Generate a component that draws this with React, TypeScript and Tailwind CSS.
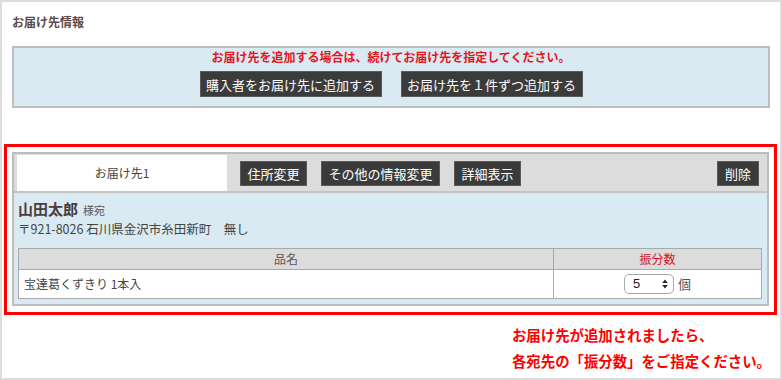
import React from "react";

function DarkButton({ children, className = "" }: { children: React.ReactNode; className?: string }) {
  return (
    <div
      className={
        "flex items-center justify-center bg-[#3b3b3b] border border-[#5a5a5a] text-white text-[13px] leading-none whitespace-nowrap " +
        className
      }
    >
      {children}
    </div>
  );
}

export default function App() {
  return (
    <div className="w-[782px] h-[380px] box-border border-2 border-[#dcdcdc] bg-white px-[10px] font-['Noto_Sans_CJK_JP',sans-serif] text-[#4a4a4a] overflow-hidden">
      {/* Title */}
      <div className="pt-[10px] h-[30px] text-[12px] leading-[20px] font-bold text-[#5b4a4a]">お届け先情報</div>

      {/* Add box */}
      <div className="mt-[14px] border-2 border-[#bdbdbd] bg-[#d9eaf3] h-[62px] box-border flex flex-col items-center">
        <div className="pt-[2px] text-[12px] leading-[14px] font-bold text-[#e8141c]">
          お届け先を追加する場合は、続けてお届け先を指定してください。
        </div>
        <div className="mt-[7px] flex gap-[19px]">
          <DarkButton className="w-[182px] h-[26px]">購入者をお届け先に追加する</DarkButton>
          <DarkButton className="w-[182px] h-[26px]">お届け先を１件ずつ追加する</DarkButton>
        </div>
      </div>

      {/* Red frame */}
      <div className="mt-[36px] ml-[-8px] mr-[-7px] border-[3px] border-[#ff0000] pt-[5px] pl-[5px] pr-[5px] pb-[6px]">
        <div className="border-2 border-[#bdbdbd] bg-[#d9eaf3]">
          {/* header */}
          <div className="bg-[#dcdcdc] border-b-2 border-[#c4c4c4] pt-[1px] pl-[3px] pr-[8px] flex items-center">
            <div className="w-[210px] h-[36px] bg-white flex items-center justify-center text-[12px] text-[#444]">
              お届け先1
            </div>
            <div className="ml-[13px] flex gap-[14px] flex-1">
              <DarkButton className="w-[67px] h-[25px]">住所変更</DarkButton>
              <DarkButton className="w-[119px] h-[25px]">その他の情報変更</DarkButton>
              <DarkButton className="w-[67px] h-[25px]">詳細表示</DarkButton>
              <div className="flex-1" />
              <DarkButton className="w-[42px] h-[25px]">削除</DarkButton>
            </div>
          </div>

          {/* body */}
          <div className="pl-[4px] pr-[5px] pt-[5px] pb-[5px]">
            <div className="leading-[20px] text-[#4a3c3c]">
              <span className="text-[15px] font-bold">山田太郎</span>
              <span className="ml-[5px] text-[11px] text-[#555]">様宛</span>
            </div>
            <div className="text-[12.5px] leading-[18px] text-[#444]">〒921-8026 石川県金沢市糸田新町　無し</div>

            <div className="mt-[10px] border border-[#a9a9a9] bg-white">
              <div className="flex h-[21px] bg-[#dcdcdc] border-b border-[#a9a9a9] text-[12px]">
                <div className="w-[535px] border-r border-[#a9a9a9] flex items-center justify-center text-[#555]">
                  品名
                </div>
                <div className="flex-1 flex items-center justify-center text-[#d3141e]">振分数</div>
              </div>
              <div className="flex h-[28px] text-[12px]">
                <div className="w-[535px] border-r border-[#a9a9a9] flex items-center pl-[5px] text-[#444]">
                  宝達葛くずきり 1本入
                </div>
                <div className="flex-1 flex items-center justify-center gap-[4px]">
                  <div className="w-[50px] h-[20px] box-border rounded-[5px] border border-[#a9a9a9] bg-white flex items-center justify-between pl-[8px] pr-[5px] font-['Liberation_Sans',sans-serif] text-[13px] text-[#222]">
                    <span>5</span>
                    <svg width="6" height="10" viewBox="0 0 6 10">
                      <path d="M3 0.5 L5.8 4 L0.2 4 Z" fill="#222" />
                      <path d="M3 9.5 L5.8 6 L0.2 6 Z" fill="#222" />
                    </svg>
                  </div>
                  <span className="text-[13px] text-[#555]">個</span>
                </div>
              </div>
            </div>
          </div>
        </div>
      </div>

      {/* note */}
      <div className="mt-[7px] flex justify-end mr-[-1px]">
        <div className="text-[14.4px] leading-[26px] font-bold text-[#ff0000]">
          <div>お届け先が追加されましたら、</div>
          <div>各宛先の「振分数」をご指定ください。</div>
        </div>
      </div>
    </div>
  );
}
